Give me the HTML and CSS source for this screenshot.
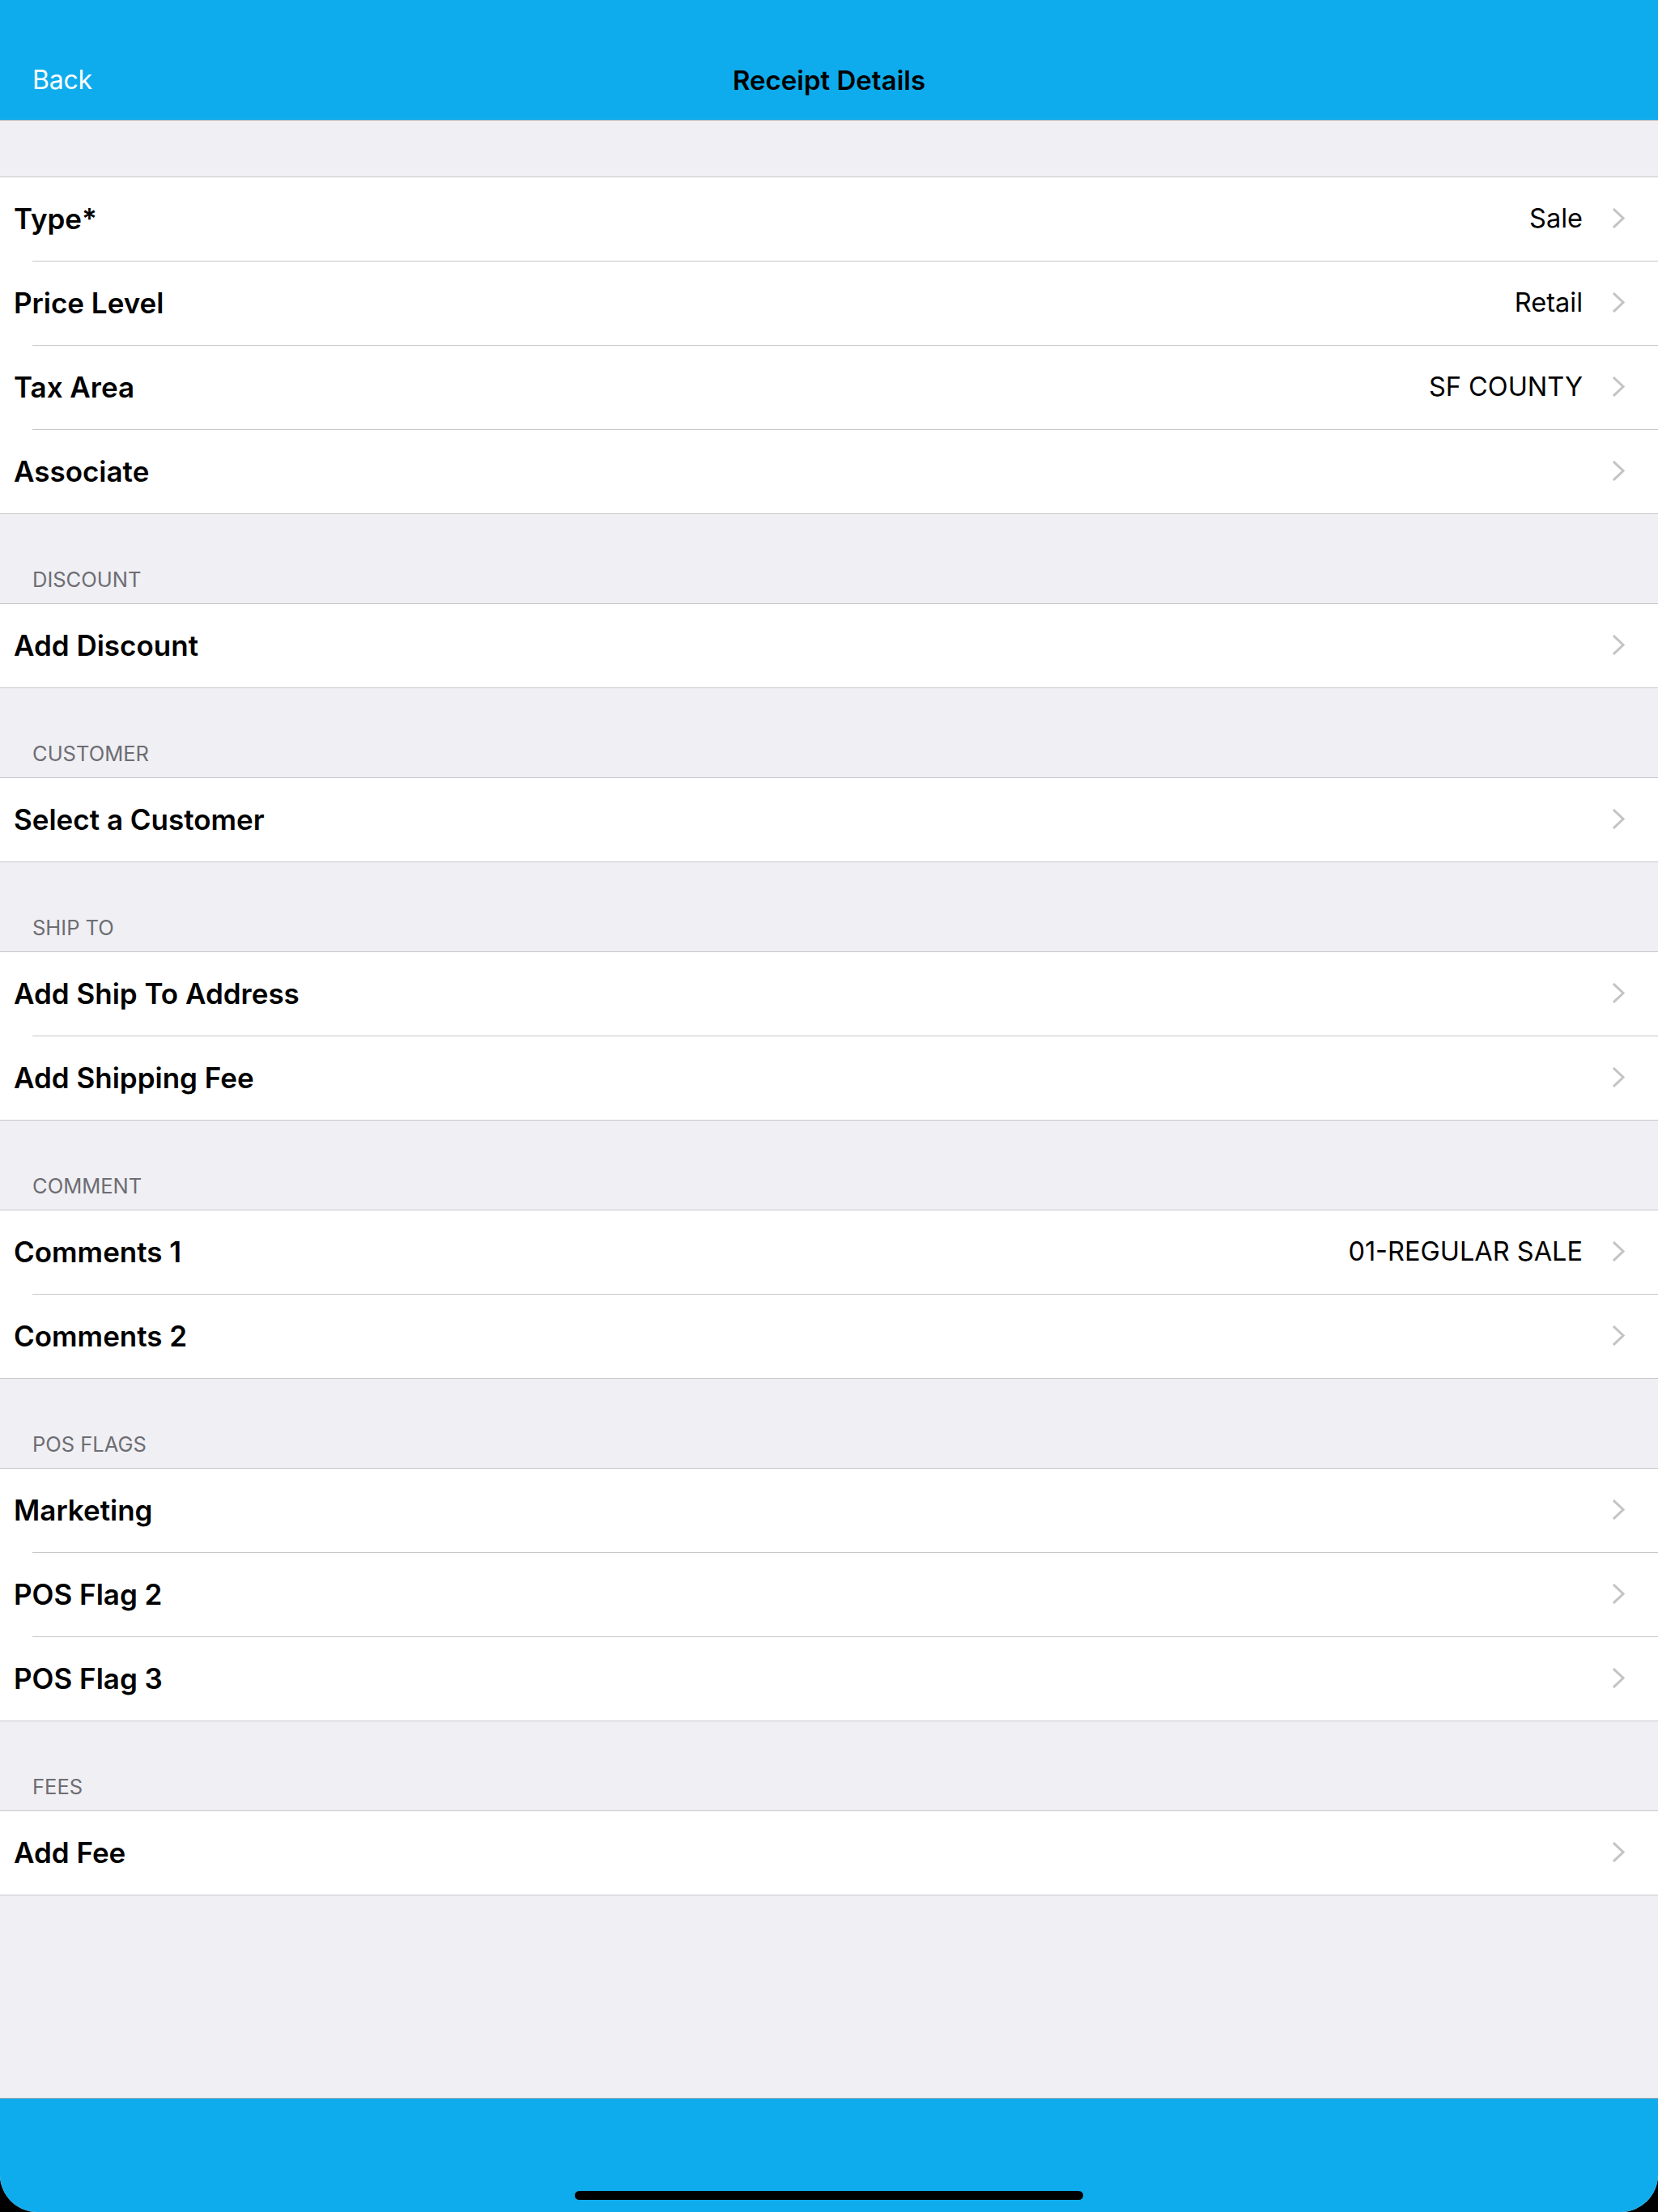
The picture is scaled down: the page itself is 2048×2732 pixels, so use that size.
FILE: index.html
```html
<!DOCTYPE html>
<html lang="en">
<head>
<meta charset="utf-8">
<title>Receipt Details</title>
<link rel="stylesheet" href="styles.css">
</head>
<body>
<div class="screen">
  <header class="navbar">
    <div class="nav-left"><span class="back">Back</span></div>
    <div class="nav-title">Receipt Details</div>
    <div class="nav-right"></div>
  </header>

  <main class="content">
    <div class="top-gap"></div>

    <section class="group">
      <div class="row"><span class="label">Type*</span><span class="value">Sale</span><svg class="chev" viewBox="0 0 15 25"><path d="M2 2 L13 12.5 L2 23"/></svg></div>
      <div class="row"><span class="label">Price Level</span><span class="value">Retail</span><svg class="chev" viewBox="0 0 15 25"><path d="M2 2 L13 12.5 L2 23"/></svg></div>
      <div class="row"><span class="label">Tax Area</span><span class="value">SF COUNTY</span><svg class="chev" viewBox="0 0 15 25"><path d="M2 2 L13 12.5 L2 23"/></svg></div>
      <div class="row"><span class="label">Associate</span><span class="value"></span><svg class="chev" viewBox="0 0 15 25"><path d="M2 2 L13 12.5 L2 23"/></svg></div>
    </section>

    <div class="section-header">DISCOUNT</div>
    <section class="group">
      <div class="row"><span class="label">Add Discount</span><span class="value"></span><svg class="chev" viewBox="0 0 15 25"><path d="M2 2 L13 12.5 L2 23"/></svg></div>
    </section>

    <div class="section-header">CUSTOMER</div>
    <section class="group">
      <div class="row"><span class="label">Select a Customer</span><span class="value"></span><svg class="chev" viewBox="0 0 15 25"><path d="M2 2 L13 12.5 L2 23"/></svg></div>
    </section>

    <div class="section-header">SHIP TO</div>
    <section class="group">
      <div class="row"><span class="label">Add Ship To Address</span><span class="value"></span><svg class="chev" viewBox="0 0 15 25"><path d="M2 2 L13 12.5 L2 23"/></svg></div>
      <div class="row"><span class="label">Add Shipping Fee</span><span class="value"></span><svg class="chev" viewBox="0 0 15 25"><path d="M2 2 L13 12.5 L2 23"/></svg></div>
    </section>

    <div class="section-header">COMMENT</div>
    <section class="group">
      <div class="row"><span class="label">Comments 1</span><span class="value">01-REGULAR SALE</span><svg class="chev" viewBox="0 0 15 25"><path d="M2 2 L13 12.5 L2 23"/></svg></div>
      <div class="row"><span class="label">Comments 2</span><span class="value"></span><svg class="chev" viewBox="0 0 15 25"><path d="M2 2 L13 12.5 L2 23"/></svg></div>
    </section>

    <div class="section-header">POS FLAGS</div>
    <section class="group">
      <div class="row"><span class="label">Marketing</span><span class="value"></span><svg class="chev" viewBox="0 0 15 25"><path d="M2 2 L13 12.5 L2 23"/></svg></div>
      <div class="row"><span class="label">POS Flag 2</span><span class="value"></span><svg class="chev" viewBox="0 0 15 25"><path d="M2 2 L13 12.5 L2 23"/></svg></div>
      <div class="row"><span class="label">POS Flag 3</span><span class="value"></span><svg class="chev" viewBox="0 0 15 25"><path d="M2 2 L13 12.5 L2 23"/></svg></div>
    </section>

    <div class="section-header">FEES</div>
    <section class="group">
      <div class="row"><span class="label">Add Fee</span><span class="value"></span><svg class="chev" viewBox="0 0 15 25"><path d="M2 2 L13 12.5 L2 23"/></svg></div>
    </section>
  </main>

  <footer class="bottombar">
    <div class="home-indicator"></div>
  </footer>
</div>
</body>
</html>
```

FILE: styles.css
```css
* {
  box-sizing: border-box;
}

html, body {
  margin: 0;
  padding: 0;
  background: #000;
}

body {
  font-family: Inter, "Noto Sans", "Liberation Sans", sans-serif;
  -webkit-font-smoothing: antialiased;
}

.screen {
  width: 2048px;
  height: 2732px;
  display: flex;
  flex-direction: column;
  background: #efeff4;
  border-radius: 0 0 46px 46px;
  overflow: hidden;
}

.navbar {
  height: 149px;
  flex: none;
  background: #0eacec;
  border-bottom: 1px solid #b4b4b8;
  display: grid;
  grid-template-columns: 1fr auto 1fr;
  align-items: center;
  padding: 49px 0 0 0;
}

.nav-left {
  padding-left: 40px;
}

.back {
  color: #ffffff;
  font-size: 32px;
  font-weight: 400;
  letter-spacing: -0.2px;
}

.nav-title {
  color: #000;
  font-size: 33px;
  font-weight: 600;
  letter-spacing: 0;
}

.content {
  flex: 1;
  display: flex;
  flex-direction: column;
}

.top-gap {
  height: 69px;
}

.group {
  background: #fff;
  border-top: 1px solid #c8c7cc;
  border-bottom: 1px solid #c8c7cc;
}

.row {
  height: 103px;
  display: flex;
  align-items: center;
  padding-left: 17px;
  padding-right: 41px;
  padding-bottom: 2px;
  position: relative;
}

.row + .row {
  height: 104px;
  border-top: 1px solid transparent;
}

.row + .row::before {
  content: "";
  position: absolute;
  left: 40px;
  right: 0;
  top: -1px;
  height: 1px;
  background: #c8c7cc;
}

.label {
  flex: 1;
  font-size: 35px;
  font-weight: 600;
  color: #000;
  letter-spacing: 0;
}

.value {
  font-size: 32.5px;
  font-weight: 400;
  color: #000;
  margin-right: 37px;
  letter-spacing: 0;
}

.chev {
  width: 15px;
  height: 25px;
  flex: none;
}

.chev path {
  fill: none;
  stroke: #c4c4c7;
  stroke-width: 3;
  stroke-linecap: square;
  stroke-linejoin: miter;
}

.section-header {
  height: 110px;
  display: flex;
  align-items: flex-end;
  padding: 0 40px 13px 40px;
  font-size: 25.5px;
  line-height: 32px;
  color: #6d6d72;
  font-weight: 400;
  letter-spacing: 0;
}

.bottombar {
  height: 141px;
  flex: none;
  background: #0eacec;
  border-top: 1px solid #a8a8ac;
  display: flex;
  justify-content: center;
  align-items: flex-end;
  padding-bottom: 15px;
}

.home-indicator {
  width: 628px;
  height: 11px;
  border-radius: 6px;
  background: #000;
}
```
